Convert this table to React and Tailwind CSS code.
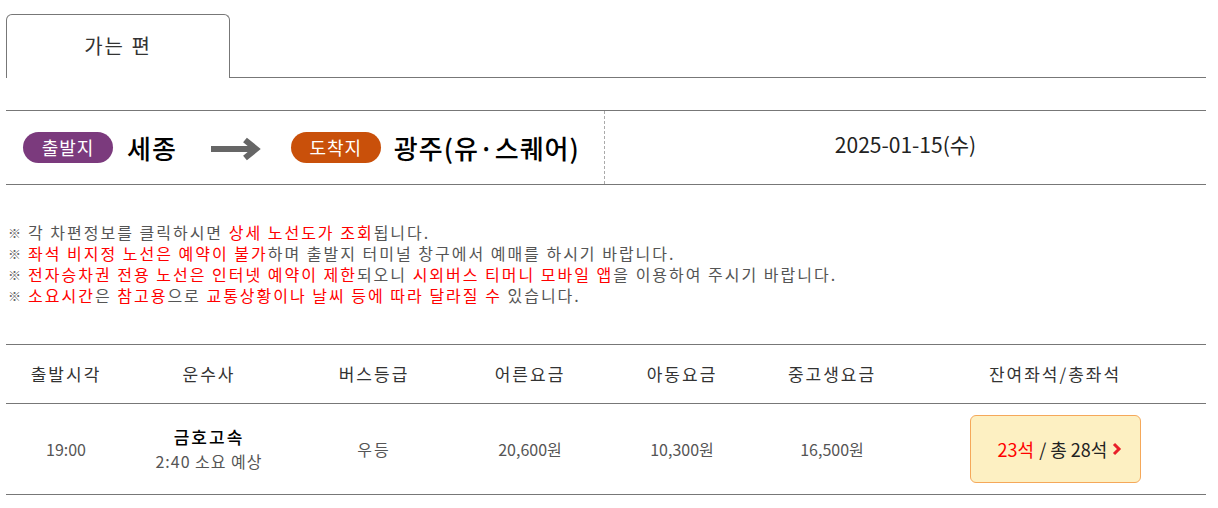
import React from 'react';

const font = { fontFamily: '"Noto Sans CJK KR", "Noto Sans", sans-serif' };

function Arrow() {
    return (
        <svg width="52" height="24" viewBox="0 0 52 24">
            <path d="M2 12 H44" stroke="#666" strokeWidth="6" />
            <path d="M36 3 L47 12 L36 21" fill="none" stroke="#666" strokeWidth="6" strokeLinejoin="miter" />
        </svg>
    );
}

const notices = [
    [['각 차편정보를 클릭하시면 ', false], ['상세 노선도가 조회', true], ['됩니다.', false]],
    [['좌석 비지정 노선은 예약이 불가', true], ['하며 출발지 터미널 창구에서 예매를 하시기 바랍니다.', false]],
    [['전자승차권 전용 노선은 인터넷 예약이 제한', true], ['되오니 ', false], ['시외버스 티머니 모바일 앱', true], ['을 이용하여 주시기 바랍니다.', false]],
    [['소요시간', true], ['은 ', false], ['참고용', true], ['으로 ', false], ['교통상황이나 날씨 등에 따라 달라질 수', true], [' 있습니다.', false]],
];

const cols = [
    { label: '출발시각', w: 'w-[120px]' },
    { label: '운수사', w: 'w-[166px]' },
    { label: '버스등급', w: 'w-[164px]' },
    { label: '어른요금', w: 'w-[148px]' },
    { label: '아동요금', w: 'w-[156px]' },
    { label: '중고생요금', w: 'w-[144px]' },
    { label: '잔여좌석/총좌석', w: 'flex-1' },
];

export default function App() {
    return (
        <div className="bg-white w-[1218px] h-[508px]" style={font}>
            <div className="ml-[6px] w-[1200px] pt-[14px]">
                {/* tab */}
                <div className="flex items-end">
                    <div className="w-[224px] h-[64px] border border-b-0 border-[#777] rounded-t-[6px] flex items-center justify-center text-[20px] tracking-[2px] text-[#333] pb-[2px]">
                        가는 편
                    </div>
                    <div className="flex-1 border-b border-[#777]"></div>
                </div>

                {/* route */}
                <div className="mt-[32px] flex h-[75px] border-y border-[#777]">
                    <div className="w-[599px] flex items-center pl-[17px] border-r border-dashed border-[#aaa]">
                        <span className="w-[90px] h-[31px] rounded-full bg-[#7b3a7d] text-white text-[18px] tracking-[1px] flex items-center justify-center">출발지</span>
                        <span className="ml-[14px] text-[26px] tracking-[1px] font-medium text-black">세종</span>
                        <span className="ml-[32px] mt-[2px]"><Arrow /></span>
                        <span className="ml-[30px] w-[90px] h-[31px] rounded-full bg-[#c9500a] text-white text-[18px] tracking-[1px] flex items-center justify-center">도착지</span>
                        <span className="ml-[13px] text-[26px] tracking-[1px] font-medium text-black">광주(유·스퀘어)</span>
                    </div>
                    <div className="flex-1 flex items-center justify-center text-[21px] text-[#222] pb-[6px]">
                        2025-01-15(수)
                    </div>
                </div>

                {/* notices */}
                <div className="mt-[37px] pl-[2px] text-[16px] leading-[21px] tracking-[2px] text-[#555]">
                    {notices.map((line, i) => (
                        <div key={i} className="flex h-[21px] items-center">
                            <span className="w-[20px] text-[13px] leading-[21px] font-bold tracking-normal text-[#666]">※</span>
                            <span>
                                {line.map(([t, red], j) => (
                                    <span key={j} className={red ? 'text-[#f00]' : ''}>{t}</span>
                                ))}
                            </span>
                        </div>
                    ))}
                </div>

                {/* table */}
                <div className="mt-[38px] border-t border-[#777]">
                    <div className="flex h-[59px] items-center border-b border-[#777] text-[17px] tracking-[2px] text-[#333]">
                        {cols.map((c) => (
                            <div key={c.label} className={`${c.w} text-center`}>{c.label}</div>
                        ))}
                    </div>
                    <div className="flex h-[91px] items-center border-b border-[#777] text-[16px] text-[#555]">
                        <div className="w-[120px] text-center">19:00</div>
                        <div className="w-[166px] text-center leading-[24px]">
                            <div className="text-black font-medium text-[17px] tracking-[2px]">금호고속</div>
                            <div className="tracking-[1px]">2:40 소요 예상</div>
                        </div>
                        <div className="w-[164px] text-center tracking-[2px]">우등</div>
                        <div className="w-[148px] text-center">20,600원</div>
                        <div className="w-[156px] text-center">10,300원</div>
                        <div className="w-[144px] text-center">16,500원</div>
                        <div className="flex-1 flex justify-center">
                            <button className="w-[171px] h-[68px] bg-[#fdf0c2] border border-[#f5a85a] rounded-[6px] flex items-center justify-center text-[18px] text-[#222] pl-[10px]">
                                <span className="text-[#f00]">23석</span>
                                <span className="ml-[5px]">/ 총 28석</span>
                                <svg className="ml-[5px]" width="10" height="14" viewBox="0 0 10 14">
                                    <path d="M2 2 L7 7 L2 12" fill="none" stroke="#e8202a" strokeWidth="3" />
                                </svg>
                            </button>
                        </div>
                    </div>
                </div>
            </div>
        </div>
    );
}
